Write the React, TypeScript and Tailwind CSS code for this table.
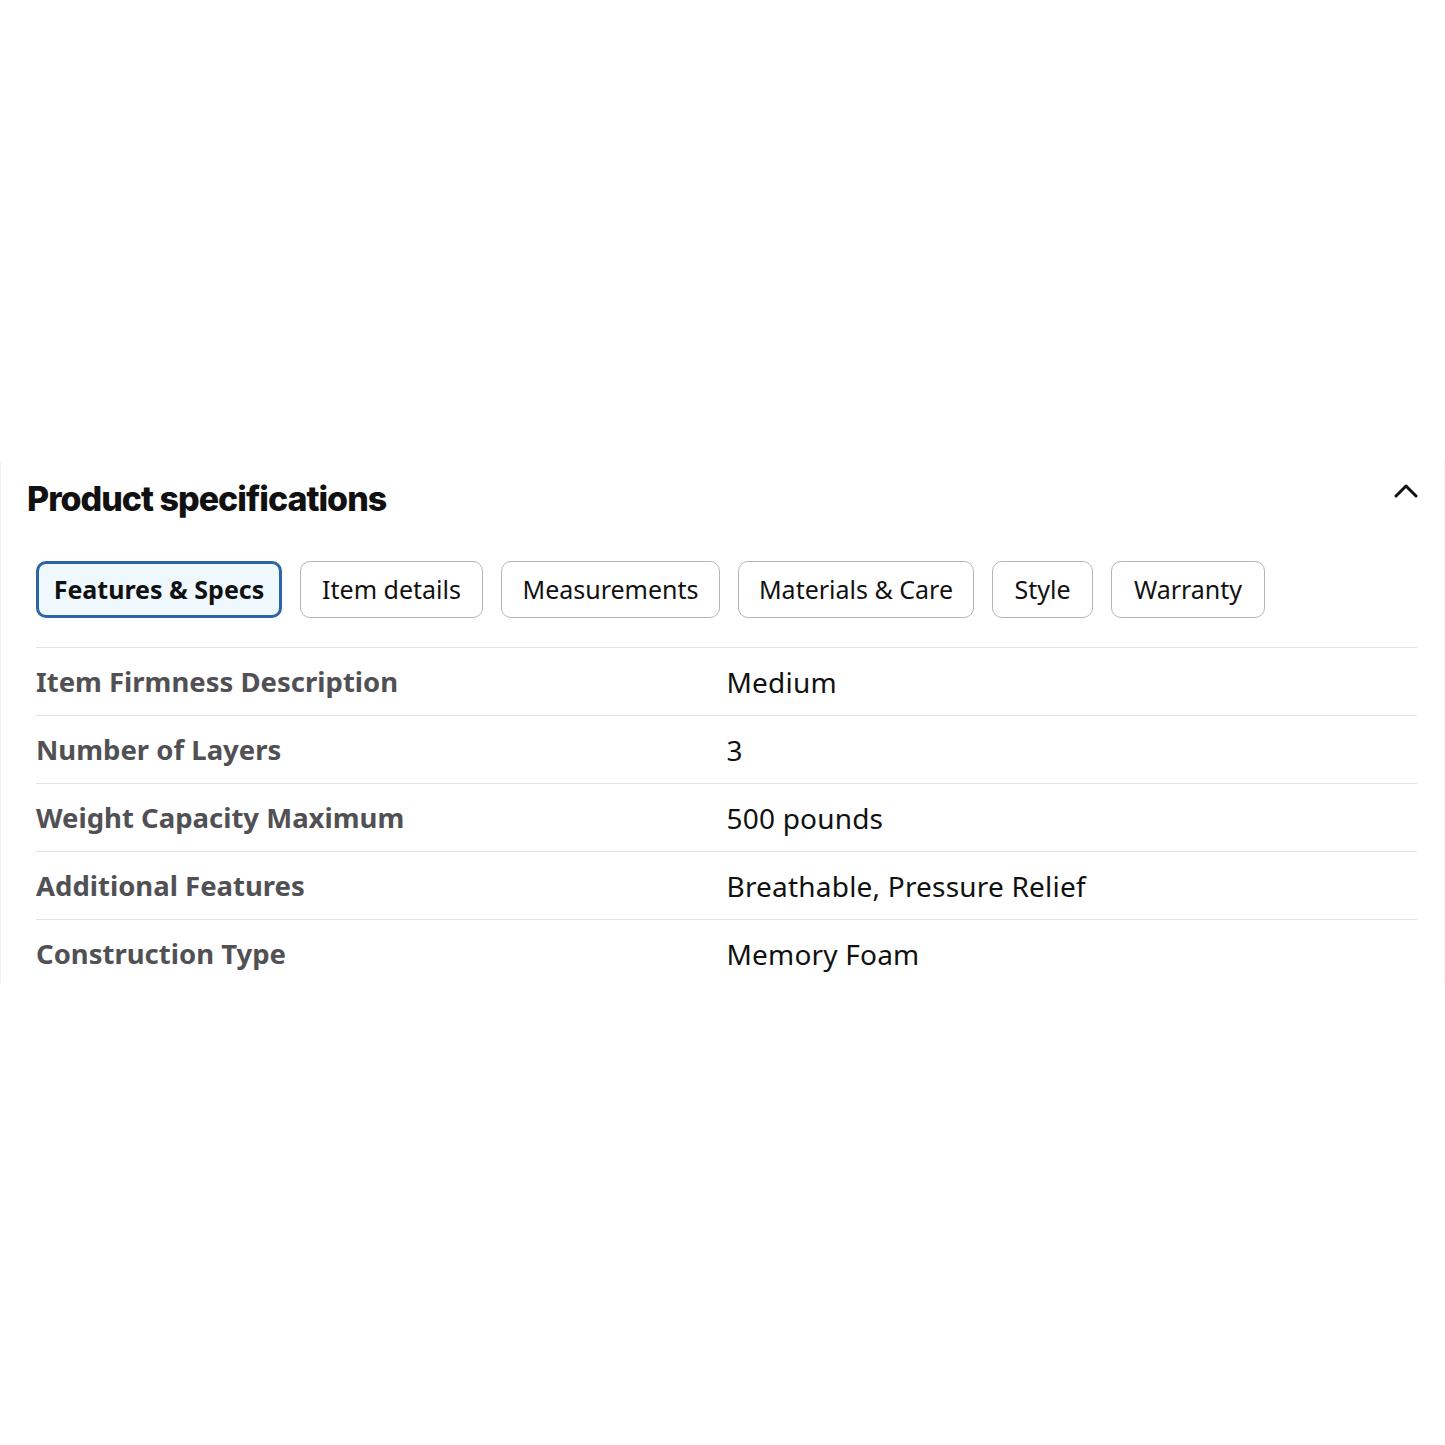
import React, { useState } from "react";

const tabs = [
  { name: "Features & Specs", w: "w-[246px]" },
  { name: "Item details", w: "w-[183px]" },
  { name: "Measurements", w: "w-[219px]" },
  { name: "Materials & Care", w: "w-[236px]" },
  { name: "Style", w: "w-[101px]" },
  { name: "Warranty", w: "w-[154px]" },
];

const specs = [
  { label: "Item Firmness Description", value: "Medium" },
  { label: "Number of Layers", value: "3" },
  { label: "Weight Capacity Maximum", value: "500 pounds" },
  { label: "Additional Features", value: "Breathable, Pressure Relief" },
  { label: "Construction Type", value: "Memory Foam" },
];

export default function App() {
  const [active, setActive] = useState(0);

  return (
    <div className="w-[1445px] h-[1445px] bg-white flex flex-col" style={{ fontFamily: '"Noto Sans", "Open Sans", sans-serif' }}>
      <div className="h-[462px] shrink-0" />
      <section className="h-[521px] shrink-0 border-x border-[#f0f0f0] flex flex-col">
        <div className="flex items-center justify-between px-[26px] h-[72px] shrink-0">
          <h2 className="text-[34px] font-extrabold tracking-[-1px] text-[#111]" style={{ fontFamily: "Inter, sans-serif" }}>
            Product specifications
          </h2>
          <svg width="24" height="16" viewBox="0 0 24 16" className="mb-[14px]">
            <path d="M2 13 L12 3 L22 13" fill="none" stroke="#111" strokeWidth="3" strokeLinecap="round" strokeLinejoin="round" />
          </svg>
        </div>

        <div className="flex gap-[18px] pl-[35px] pt-[27px] shrink-0">
          {tabs.map((t, i) => (
            <button
              key={t.name}
              onClick={() => setActive(i)}
              className={
                i === active
                  ? `${t.w} h-[57px] flex items-center justify-center rounded-[10px] border-[3px] border-[#2b64a8] bg-[#eef8fd] text-[25px] font-bold text-[#111]`
                  : `${t.w} h-[57px] flex items-center justify-center rounded-[10px] border border-[#b5b5b5] bg-white text-[25px] text-[#111]`
              }
            >
              {t.name}
            </button>
          ))}
        </div>

        <div className="ml-[35px] mr-[27px] mt-[29px] border-t border-[#e2e2e2]">
          {specs.map((s, i) => (
            <div
              key={s.label}
              className={
                i < specs.length - 1
                  ? "grid grid-cols-2 h-[68px] items-center border-b border-[#e2e2e2]"
                  : "grid grid-cols-2 h-[68px] items-center"
              }
            >
              <div className="text-[27.5px] font-bold text-[#515155]">{s.label}</div>
              <div className="text-[28px] tracking-[0.2px] text-[#111]">{s.value}</div>
            </div>
          ))}
        </div>
      </section>
    </div>
  );
}
